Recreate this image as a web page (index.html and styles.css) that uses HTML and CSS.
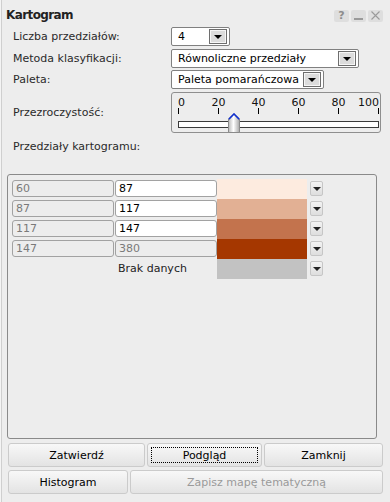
FILE: index.html
```html
<!DOCTYPE html>
<html lang="pl">
<head>
<meta charset="utf-8">
<title>Kartogram</title>
<link rel="stylesheet" href="styles.css">
</head>
<body>
<div class="win">
  <div class="titlebar">
    <div class="title">Kartogram</div>
    <div class="tools">
      <span class="tool q">?</span>
      <span class="tool"><svg width="15" height="12" viewBox="0 0 15 12"><rect x="3" y="8" width="9" height="2" fill="#9a9a9a"/></svg></span>
      <span class="tool"><svg width="15" height="12" viewBox="0 0 15 12"><path d="M3.5 1.5 L11.5 9.5 M11.5 1.5 L3.5 9.5" stroke="#9a9a9a" stroke-width="1.1" fill="none"/></svg></span>
    </div>
  </div>

  <div class="row r1">
    <label class="lbl">Liczba przedziałów:</label>
    <div class="select s1"><span>4</span><span class="dd"></span></div>
  </div>
  <div class="row r2">
    <label class="lbl">Metoda klasyfikacji:</label>
    <div class="select s2"><span>Równoliczne przedziały</span><span class="dd"></span></div>
  </div>
  <div class="row r3">
    <label class="lbl">Paleta:</label>
    <div class="select s3"><span>Paleta pomarańczowa</span><span class="dd"></span></div>
  </div>
  <div class="row r4">
    <label class="lbl">Przezroczystość:</label>
    <div class="slider">
      <div class="scale">
        <span class="sl first">0</span>
        <span class="sl">20</span>
        <span class="sl">40</span>
        <span class="sl">60</span>
        <span class="sl">80</span>
        <span class="sl last">100</span>
      </div>
      <div class="ticks"><i></i><i></i><i></i><i></i><i></i><i></i></div>
      <div class="track"></div>
      <svg class="thumb" width="12" height="20" viewBox="0 0 12 20">
        <defs>
          <linearGradient id="tg" x1="0" x2="1" y1="0" y2="0">
            <stop offset="0" stop-color="#b9b9b9"/>
            <stop offset="0.45" stop-color="#ffffff"/>
            <stop offset="1" stop-color="#a8a8a8"/>
          </linearGradient>
        </defs>
        <path d="M0.5 6 L6 0.8 L11.5 6 L11.5 19.5 L0.5 19.5 Z" fill="url(#tg)" stroke="#8a8a8a" stroke-width="1"/>
        <path d="M0.8 6.2 L6 1 L11.2 6.2" fill="none" stroke="#1030d0" stroke-width="1.6"/>
      </svg>
    </div>
  </div>
  <div class="row r5">
    <label class="lbl">Przedziały kartogramu:</label>
  </div>

  <div class="panel">
    <div class="classes">
      <div class="inp from">60</div><div class="inp to">87</div><div class="sw c1"></div><div class="dd-sm"></div>
      <div class="inp from">87</div><div class="inp to">117</div><div class="sw c2"></div><div class="dd-sm"></div>
      <div class="inp from">117</div><div class="inp to">147</div><div class="sw c3"></div><div class="dd-sm"></div>
      <div class="inp from">147</div><div class="inp to off">380</div><div class="sw c4"></div><div class="dd-sm"></div>
      <div></div><div class="nodata">Brak danych</div><div class="sw c5"></div><div class="dd-sm"></div>
    </div>
  </div>

  <div class="actions a1">
    <button class="btn">Zatwierdź</button>
    <button class="btn focus">Podgląd</button>
    <button class="btn">Zamknij</button>
  </div>
  <div class="actions a2">
    <button class="btn">Histogram</button>
    <button class="btn dis">Zapisz mapę tematyczną</button>
  </div>
</div>
</body>
</html>
```

FILE: styles.css
```css
* { box-sizing: border-box; margin: 0; padding: 0; }
html, body { width: 390px; height: 502px; overflow: hidden; }
body {
  background: linear-gradient(to right, #f4f4f4 0 1px, #cfcfcf 1px 2px, #ededed 2px);
  font: 11px/13px "DejaVu Sans", Verdana, sans-serif;
  color: #2a2a2a;
}
.win { width: 390px; height: 502px; }

.titlebar {
  display: flex;
  align-items: center;
  justify-content: space-between;
  height: 27px;
  padding: 3px 7px 0 6px;
}
.title { font-weight: bold; font-size: 12px; letter-spacing: -0.6px; color: #222; }
.tools { display: flex; gap: 2px; margin-top: 1px; }
.tool {
  width: 15px; height: 12px;
  background: #dedede;
  border-radius: 2px;
  display: flex; align-items: center; justify-content: center;
  color: #8c8c8c;
  font-weight: bold;
  font-size: 11px;
  line-height: 12px;
}

.row { display: flex; align-items: center; padding-left: 13px; }
.lbl { width: 158px; flex: none; }
.r1 { height: 19px; }
.r2 { height: 19px; margin-top: 3px; }
.r3 { height: 19px; margin-top: 2px; }
.r4 { height: 41px; margin-top: 3px; }
.r5 { height: 13px; margin-top: 7px; }

.select {
  display: flex; align-items: center; justify-content: space-between;
  height: 19px;
  border: 1px solid #808080;
  border-radius: 2px;
  background: #fff;
  padding: 0 2px 0 6px;
  color: #000;
}
.s1 { width: 59px; }
.s2 { width: 188px; }
.s3 { width: 153px; }
.dd {
  width: 18px; height: 15px;
  border: 1px solid #6e6e6e;
  background: #dcdcdc;
  box-shadow: inset 0 0 0 1px #f6f6f6;
  display: flex; align-items: center; justify-content: center;
}
.dd::after {
  content: "";
  border-left: 4px solid transparent;
  border-right: 4px solid transparent;
  border-top: 4px solid #000;
  margin-top: 1px;
}

.slider {
  position: relative;
  width: 210px; height: 41px;
  border: 1px solid #8f8f8f;
  border-radius: 3px;
  padding: 5px 2px 0 6px;
}
.scale {
  display: flex; justify-content: space-between;
  width: 201px; height: 10px; line-height: 10px;
  color: #111;
}
.sl { width: 1px; display: flex; justify-content: center; white-space: nowrap; }
.sl.first { justify-content: flex-start; }
.sl.last { justify-content: flex-end; }
.ticks { display: flex; justify-content: space-between; width: 201px; height: 6px; }
.ticks i { width: 1px; background: #000; }
.track {
  width: 201px; height: 7px;
  margin-top: 7px;
  border: 1px solid #3a3a3a;
  background: #fff;
}
.thumb { position: absolute; left: 56px; top: 20px; }

.panel {
  margin: 21px 0 0 7px;
  width: 370px; height: 265px;
  border: 1px solid #8a8a8a;
  border-radius: 3px;
  padding: 4px 0 0 4px;
}
.classes {
  display: grid;
  grid-template-columns: 103px 102px 90px 16px;
  grid-auto-rows: 20px;
}
.inp {
  width: 102px; height: 17px;
  margin-top: 1px;
  border: 1px solid #a2a2a2;
  border-radius: 3px;
  padding-left: 3px;
  line-height: 15px;
  color: #7a7a7a;
}
.inp.to { background: #fff; color: #000; }
.inp.to.off { background: transparent; color: #7a7a7a; }
.nodata { padding-left: 3px; line-height: 20px; color: #222; }
.sw { height: 20px; }
.c1 { background: #fdebdf; }
.c2 { background: #e2b094; }
.c3 { background: #c3734d; }
.c4 { background: #a53700; }
.c5 { background: #c2c2c2; }
.dd-sm {
  justify-self: end;
  width: 13px; height: 15px;
  margin-top: 2px;
  border: 1px solid #c6c6c6;
  border-radius: 2px;
  background: linear-gradient(#f2f2f2, #dedede);
  display: flex; align-items: center; justify-content: center;
}
.dd-sm::after {
  content: "";
  border-left: 4px solid transparent;
  border-right: 4px solid transparent;
  border-top: 4px solid #222;
  margin-top: 1px;
}

.actions { display: grid; gap: 2px; margin-left: 8px; }
.a1 { grid-template-columns: 137px 115px 119px; margin-top: 4px; }
.a2 { grid-template-columns: 120px 253px; margin-top: 3px; }
.btn {
  height: 24px;
  border: 1px solid #cbcbcb;
  border-radius: 3px;
  background: linear-gradient(#f8f8f8, #e3e3e3);
  font: 11px/13px "DejaVu Sans", Verdana, sans-serif;
  color: #000;
  display: flex; align-items: center; justify-content: center;
}
.btn.focus { outline: 1px dotted #000; outline-offset: -5px; }
.btn.dis { color: #9a9a9a; }
```
